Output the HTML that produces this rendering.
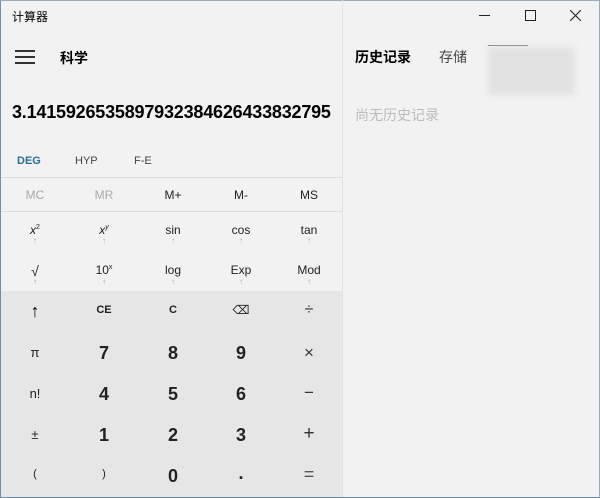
<!DOCTYPE html><html><head><meta charset="utf-8"><style>
body{margin:0;width:600px;height:498px;overflow:hidden;background:#f2f2f2;font-family:"Liberation Sans","Noto Sans CJK SC",sans-serif;position:relative;color:#000}
.a{position:absolute;white-space:nowrap}
.c{position:absolute;width:68px;text-align:center;transform:translateX(-34px)}
.s{font-size:12px;color:#222}
.sub{font-size:8px;color:#aaa}
.n{font-size:18px;font-weight:bold;color:#222}
</style></head><body>
<div class="a" style="left:0;top:0;width:1px;height:498px;background:#6a8fb0"></div>
<div class="a" style="left:0;top:497px;width:600px;height:1px;background:#6a8fb0"></div>
<div class="a" style="left:0;top:0;width:600px;height:1px;background:#9ab"></div>
<div class="a" style="left:599px;top:0;width:1px;height:498px;background:#9ab"></div>
<div class="a" style="left:12px;top:8px;font-size:12px">计算器</div>
<div class="a" style="left:15px;top:50px;width:20px;height:2px;background:#333;box-shadow:0 6px 0 #333,0 12px 0 #333"></div>
<div class="a" style="left:60px;top:48px;font-size:14px;font-weight:bold">科学</div>
<div class="a" style="left:12px;top:102px;font-size:18px;font-weight:bold;letter-spacing:-0.2px">3.14159265358979323846264338327​95</div>
<div class="a" style="left:17px;top:155px;font-size:11px;color:#2a6f9a;font-weight:bold">DEG</div>
<div class="a" style="left:75px;top:155px;font-size:11px;color:#444">HYP</div>
<div class="a" style="left:134px;top:155px;font-size:11px;color:#444">F-E</div>
<div class="a" style="left:1px;top:177px;width:342px;height:1px;background:#ddd"></div>
<div class="a" style="left:1px;top:211px;width:342px;height:1px;background:#ddd"></div>
<div class="a" style="left:1px;top:291px;width:342px;height:206px;background:#e6e6e6"></div>
<div class="a" style="left:342px;top:0;width:1px;height:497px;background:#e3e3e3"></div>
<div class="c s" style="left:35px;top:188px;color:#aaa">MC</div>
<div class="c s" style="left:104px;top:188px;color:#aaa">MR</div>
<div class="c s" style="left:173px;top:188px">M+</div>
<div class="c s" style="left:241px;top:188px">M-</div>
<div class="c s" style="left:309px;top:188px">MS</div>
<div class="c s" style="left:35px;top:223px"><i>x</i><sup style="font-size:7px">2</sup></div>
<div class="c s" style="left:104px;top:223px"><i>x<sup style="font-size:7px">y</sup></i></div>
<div class="c s" style="left:173px;top:223px">sin</div>
<div class="c s" style="left:241px;top:223px">cos</div>
<div class="c s" style="left:309px;top:223px">tan</div>
<div class="c s" style="left:35px;top:263px;font-size:14px">√</div>
<div class="c s" style="left:104px;top:263px">10<sup style="font-size:7px">x</sup></div>
<div class="c s" style="left:173px;top:263px">log</div>
<div class="c s" style="left:241px;top:263px">Exp</div>
<div class="c s" style="left:309px;top:263px">Mod</div>
<div class="c sub" style="left:35px;top:236px">↑</div><div class="c sub" style="left:104px;top:236px">↑</div><div class="c sub" style="left:173px;top:236px">↑</div><div class="c sub" style="left:241px;top:236px">↑</div><div class="c sub" style="left:309px;top:236px">↑</div>
<div class="c sub" style="left:35px;top:277px">↑</div><div class="c sub" style="left:104px;top:277px">↑</div><div class="c sub" style="left:173px;top:277px">↑</div><div class="c sub" style="left:241px;top:277px">↑</div><div class="c sub" style="left:309px;top:277px">↑</div>
<div class="c" style="left:35px;top:301px;font-size:18px">↑</div>
<div class="c s" style="left:104px;top:304px;font-weight:bold;font-size:11px">CE</div>
<div class="c s" style="left:173px;top:304px;font-weight:bold;font-size:11px">C</div>
<div class="c s" style="left:241px;top:303px;font-size:12px">⌫</div>
<div class="c" style="left:309px;top:301px;font-size:16px;color:#333">÷</div>
<div class="c s" style="left:35px;top:345px;font-size:13px">π</div>
<div class="c n" style="left:104px;top:343px">7</div><div class="c n" style="left:173px;top:343px">8</div><div class="c n" style="left:241px;top:343px">9</div>
<div class="c" style="left:309px;top:343px;font-size:17px;color:#333">×</div>
<div class="c s" style="left:35px;top:386px;font-size:13px">n!</div>
<div class="c n" style="left:104px;top:384px">4</div><div class="c n" style="left:173px;top:384px">5</div><div class="c n" style="left:241px;top:384px">6</div>
<div class="c" style="left:309px;top:383px;font-size:17px;color:#333">−</div>
<div class="c s" style="left:35px;top:427px;font-size:13px">±</div>
<div class="c n" style="left:104px;top:425px">1</div><div class="c n" style="left:173px;top:425px">2</div><div class="c n" style="left:241px;top:425px">3</div>
<div class="c" style="left:309px;top:423px;font-size:19px;color:#333">+</div>
<div class="c s" style="left:35px;top:468px;font-size:11px">(</div>
<div class="c s" style="left:104px;top:468px;font-size:11px">)</div>
<div class="c n" style="left:173px;top:466px">0</div>
<div class="c n" style="left:241px;top:463px">.</div>
<div class="c" style="left:309px;top:464px;font-size:18px;color:#555">=</div>
<div class="a" style="left:479px;top:15px;width:11px;height:1px;background:#222"></div>
<div class="a" style="left:525px;top:10px;width:9px;height:9px;border:1px solid #222"></div>
<svg class="a" style="left:570px;top:10px" width="11" height="11"><path d="M0 0L11 11M11 0L0 11" stroke="#222" stroke-width="1.1"/></svg>
<div class="a" style="left:355px;top:47px;font-size:14px;font-weight:bold">历史记录</div>
<div class="a" style="left:439px;top:47px;font-size:14px;color:#444">存储</div>
<div class="a" style="left:488px;top:45px;width:40px;height:1px;background:#777"></div>
<div class="a" style="left:488px;top:47px;width:87px;height:48px;background:#e2e2e2;filter:blur(3px)"></div>
<div class="a" style="left:355px;top:105px;font-size:14px;color:#bbb">尚无历史记录</div>
</body></html>
